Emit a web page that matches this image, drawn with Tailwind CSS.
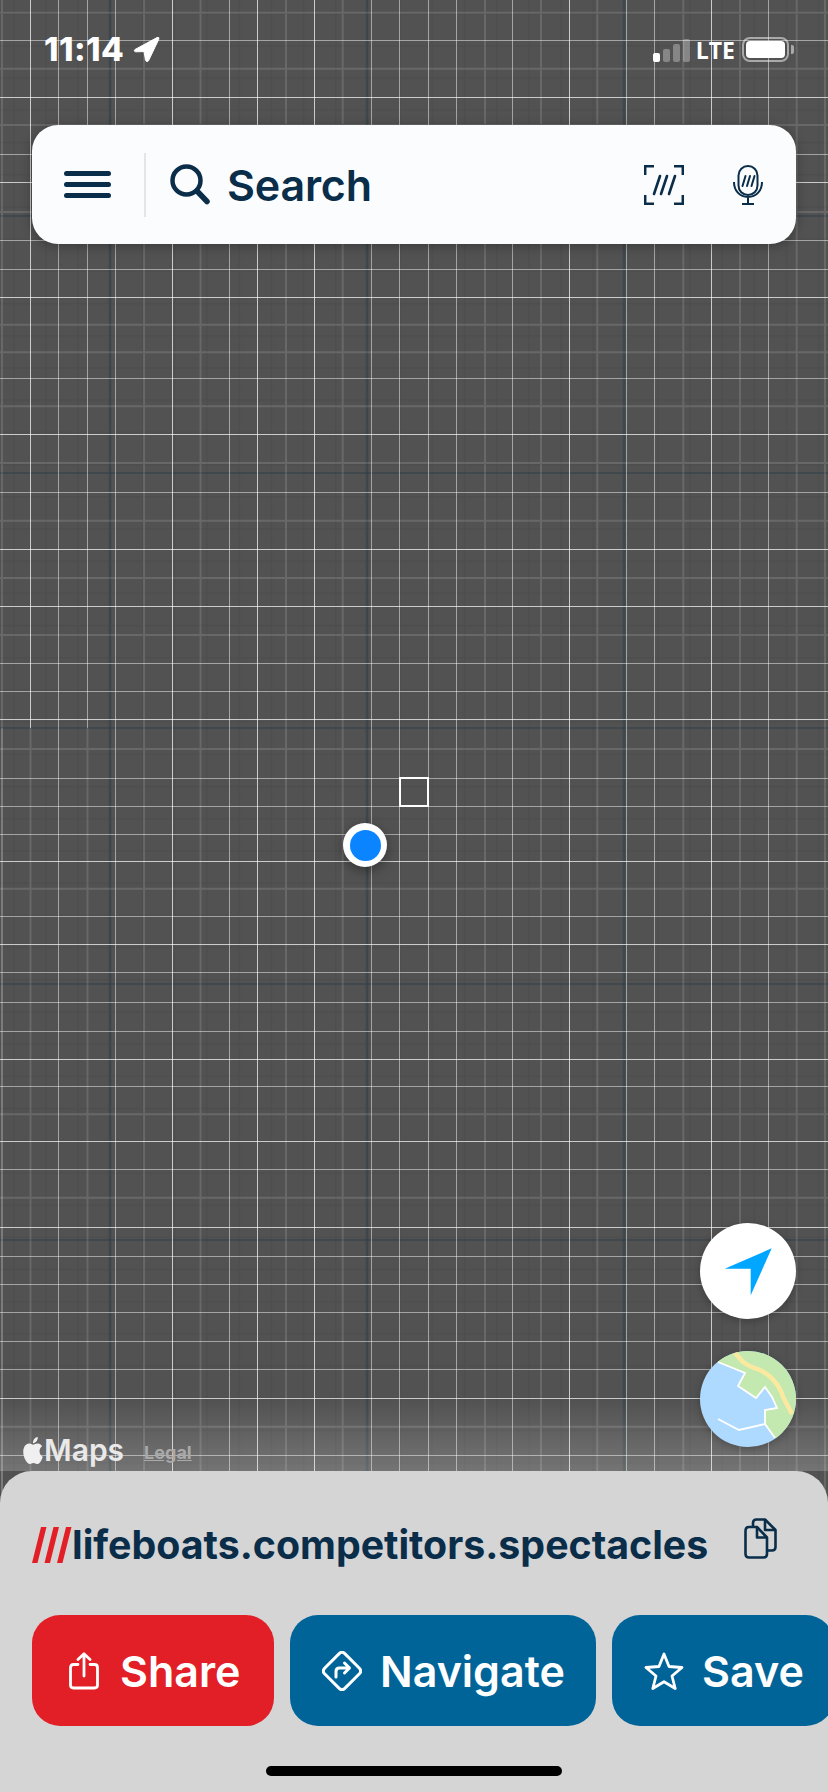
<!DOCTYPE html>
<html lang="en">
  <head>
    <meta charset="UTF-8" />
    <meta name="viewport" content="width=device-width, initial-scale=1" />
    <title>what3words map</title>
    <script src="https://cdn.jsdelivr.net/npm/@tailwindcss/browser@4"></script>
  </head>
  <body class="bg-[#525252] font-['Inter',sans-serif]">
    <div class="relative w-[828px] h-[1792px] overflow-hidden flex flex-col bg-[#525252]">
      <!-- Map grid -->
      <svg class="absolute inset-0" width="828" height="1792" fill="none">
        <defs>
          <pattern id="faint" x="13" y="13" width="32.2" height="32.2" patternUnits="userSpaceOnUse">
            <path d="M0 0V32.2M0 0H32.2" stroke="#000" stroke-opacity=".05" stroke-width="3" />
          </pattern>
        </defs>
        <rect width="828" height="1792" fill="url(#faint)" />
        <path stroke="#2f4048" stroke-opacity=".55" stroke-width="2.5" d="M110 0V1792M367 0V1792M624 0V1792" />
        <path stroke="#2f4048" stroke-opacity=".55" stroke-width="2" d="M0 216H828M0 473H828M0 728H828M0 984H828M0 1240H828" />
        <path stroke="#fff" stroke-opacity=".13" stroke-width="2" d="M2 0V728M30.5 728V1792M87.5 728V1792M144 0V1792M200.5 0V1792M286 0V1792M342.7 0V1792M485 0V1792M541 0V1792M597.3 0V1792M683.3 0V1792M740 0V1792M796.7 0V1792M825 0V1792M0 12.7H828M0 68.7H828M0 125H828M0 212H828M0 324.7H828M0 352.3H828M0 406.3H828M0 463H828M0 520.7H828M0 578H828M0 635H828M0 749H828M0 888.7H828M0 1114.3H828M0 1197.7H828M0 1426.7H828" />
        <path stroke="#fff" stroke-opacity=".48" d="M2 728V1792M58.5 0V1792M87.5 0V728M115.5 0V1792M229.5 0V1792M371.5 0V1792M399.5 0V1792M428.5 0V1792M456.5 0V1792M512.5 0V1792M626.5 0V1792M654.5 0V1792M768.5 0V1792M0 40.5H828M0 154.5H828M0 240.5H828M0 269.5H828M0 378.5H828M0 492.5H828M0 663.5H828M0 691.5H828M0 778.5H828M0 806.5H828M0 834.5H828M0 916.5H828M0 972.5H828M0 1002.5H828M0 1031.5H828M0 1086.5H828M0 1169.5H828M0 1256.5H828M0 1284.5H828M0 1312.5H828M0 1341.5H828M0 1369.5H828M0 1455.5H828" />
        <path stroke="#fff" stroke-opacity=".7" d="M30.5 0V728M172.5 0V1792M257.5 0V1792M314.5 0V1792M569.5 0V1792M711.5 0V1792M0 97.5H828M0 182.5H828M0 297.5H828M0 434.5H828M0 549.5H828M0 606.5H828M0 719.5H828M0 861.5H828M0 944.5H828M0 1059.5H828M0 1141.5H828M0 1227.5H828M0 1398.5H828" />
      </svg>
      <div class="absolute left-0 right-0 top-[1400px] h-[71px] bg-linear-to-b from-white/0 to-white/20"></div>

      <!-- Status bar -->
      <div class="relative h-[125px] flex justify-between pl-[44px] pr-[34px] pt-[29px] text-white">
        <div class="flex items-start gap-[9px]">
          <span class="text-[33px] leading-[40px] font-extrabold tracking-[0.4px]">11:14</span>
          <svg class="mt-[7px]" width="27" height="27" viewBox="0 0 27 27" fill="#fff" stroke="#fff" stroke-width="1" stroke-linejoin="round">
            <path d="M2 13.5 L24 1.6 Q26.6 .6 25.8 3.2 L15.6 24.6 Q14 27 12.6 24.4 L11 15.6 L2.6 15.8 Q0 15 2 13.5Z" />
          </svg>
        </div>
        <div class="flex items-start">
          <div class="flex items-end gap-[3px] h-[24px] mt-[9px]">
            <div class="w-[7px] h-[9px] rounded-[2px] bg-white"></div>
            <div class="w-[7px] h-[13px] rounded-[2px] bg-white/30"></div>
            <div class="w-[7px] h-[18px] rounded-[2px] bg-white/30"></div>
            <div class="w-[7px] h-[23px] rounded-[2px] bg-white/30"></div>
          </div>
          <span class="ml-[6px] mt-[5px] text-[23px] leading-[32px] font-bold font-['Open_Sans',sans-serif]">LTE</span>
          <div class="ml-[7px] mt-[8px] w-[47px] h-[25px] rounded-[8px] border-2 border-white/50 p-[2px]">
            <div class="w-full h-full rounded-[4px] bg-white"></div>
          </div>
          <div class="ml-[2px] mt-[16px] w-[3px] h-[9px] rounded-r-[2px] bg-white/50"></div>
        </div>
      </div>

      <!-- Search bar -->
      <div class="relative mx-[32px] h-[119px] rounded-[26px] bg-[#fbfcfe] shadow-[0_2px_12px_rgba(0,0,0,0.3)] flex items-center text-[#0a2d4a]">
        <svg class="ml-[32px]" width="47" height="28" viewBox="0 0 47 28" fill="#0a2d4a">
          <rect y="0" width="47" height="5" rx="2.5" />
          <rect y="11" width="47" height="5" rx="2.5" />
          <rect y="22" width="47" height="5" rx="2.5" />
        </svg>
        <div class="ml-[33px] w-[2px] h-[64px] bg-[#e4e5e8]"></div>
        <svg class="ml-[24px]" width="40" height="41" viewBox="0 0 40 41" fill="none" stroke="#0a2d4a" stroke-width="4.5" stroke-linecap="round">
          <circle cx="16.5" cy="16.5" r="14" />
          <path d="M27 27L37 37.5" stroke-width="5.5" />
        </svg>
        <span class="ml-[17px] text-[43px] leading-[50px] font-semibold tracking-[-0.2px]">Search</span>
        <svg class="ml-auto" width="40" height="40" viewBox="0 0 40 40" fill="none" stroke="#0a2d4a" stroke-width="2.5">
          <path d="M1.2 10V1.2H10M30 1.2H38.8V10M38.8 30V38.8H30M10 38.8H1.2V30" />
          <path stroke-linecap="round" stroke-width="2.6" d="M16 11L10 29M23 11L17 29M31 11L25 29" />
        </svg>
        <svg class="ml-[49px] mr-[33px]" width="30" height="40" viewBox="0 0 30 40" fill="none" stroke="#0a2d4a" stroke-width="2">
          <rect x="5.5" y="1" width="19" height="29" rx="9.5" />
          <path d="M1 17C1 25.5 6.5 32 15 32S29 25.5 29 17M15 32V39M9 39H21" />
          <path stroke-linecap="round" d="M12.5 11L9.5 21M17 11L14 21M21.5 11L18.5 21" />
        </svg>
      </div>

      <!-- Map overlays -->
      <div class="relative flex-1 flex justify-between items-end pl-[21px] pr-[32px] pb-[24px]">
        <svg class="absolute left-[399px] top-[533px]" width="30" height="30" fill="none" stroke="#fff" stroke-width="2">
          <rect x="1" y="1" width="28" height="28" />
        </svg>
        <div class="absolute left-[343px] top-[579px] w-[44px] h-[44px] rounded-full bg-white shadow-[0_4px_12px_rgba(0,0,0,0.35)] flex items-center justify-center">
          <div class="w-[31px] h-[31px] rounded-full bg-[#0a84ff]"></div>
        </div>

        <div class="flex items-center gap-[20px] -mb-[24px] pb-[3px]">
          <div class="flex items-center text-[#e9e9e9]">
            <svg width="24" height="27" viewBox="0 0 24 24" fill="#f0f0f0" preserveAspectRatio="none">
              <path d="M12.152 6.896c-.948 0-2.415-1.078-3.96-1.04-2.04.027-3.91 1.183-4.961 3.014-2.117 3.675-.546 9.103 1.519 12.09 1.013 1.454 2.208 3.09 3.792 3.039 1.52-.065 2.09-.987 3.935-.987 1.831 0 2.35.987 3.96.948 1.637-.026 2.676-1.48 3.676-2.948 1.156-1.688 1.636-3.325 1.662-3.415-.039-.013-3.182-1.221-3.22-4.857-.026-3.04 2.48-4.494 2.597-4.559-1.429-2.09-3.623-2.324-4.39-2.376-2-.156-3.675 1.09-4.61 1.09zM15.53 3.83c.843-1.012 1.4-2.427 1.245-3.83-1.207.052-2.662.805-3.532 1.818-.78.896-1.454 2.338-1.273 3.714 1.338.104 2.715-.688 3.559-1.701" />
            </svg>
            <span class="-ml-[1px] text-[30px] leading-[36px] font-semibold">Maps</span>
          </div>
          <a class="text-[18px] leading-[24px] font-bold underline text-[#a9a9a9] mt-[6px]">Legal</a>
        </div>

        <div class="flex flex-col gap-[32px]">
          <div class="w-[96px] h-[96px] rounded-full bg-white shadow-[0_2px_8px_rgba(0,0,0,0.25)] flex items-center justify-center">
            <svg width="48" height="48" viewBox="0 0 48 48" fill="#00a6ff">
              <path d="M.7 21.7L47.7 1.3 26.7 48.3V21.7Z" />
            </svg>
          </div>
          <div class="w-[96px] h-[96px] rounded-full overflow-hidden shadow-[0_2px_8px_rgba(0,0,0,0.25)]">
            <svg width="96" height="96" viewBox="0 0 96 96" fill="none">
              <rect width="96" height="96" fill="#aedaff" />
              <path fill="#c3e9b0" d="M18 11L45 22 38 35 56 47 65 36 72 46 77 57 65 59 65 73 75 87 96 96V0H18Z" />
              <path stroke="#fbe9a0" stroke-width="4.5" d="M35 2L43 11Q50 16 60 19 70 24 75 31 81 38 83 46L92 63" />
              <path stroke="#fff" stroke-width="1.8" d="M18 11L45 22 38 35 56 47 65 36 72 46 77 57 65 59 65 73 75 87M18 68L39 79 65 73" />
            </svg>
          </div>
        </div>
      </div>

      <!-- Bottom sheet -->
      <div class="relative h-[321px] rounded-t-[32px] bg-[#d5d5d5] flex flex-col">
        <div class="flex items-center h-[144px] pl-[32px] pt-[4px]">
          <svg class="shrink-0" width="40" height="36" viewBox="0 0 40 36" fill="#e21f26">
            <path d="M0 36L9 0H14.5L5.5 36ZM12.5 36L21.5 0H27L18 36ZM25 36L34 0H39.5L30.5 36Z" />
          </svg>
          <span class="text-[#0a2d4a] text-[39.3px] leading-[44px] font-bold">lifeboats.competitors.spectacles</span>
          <svg class="ml-auto mr-[51px] -mt-[14px]" width="33" height="41" viewBox="0 0 33 41" fill="none" stroke="#0a2d4a" stroke-width="2.6" stroke-linejoin="round">
            <path d="M9 9V5Q9 1.5 12.5 1.5H21L31.5 12V29Q31.5 32.5 28 32.5H23" />
            <path d="M21 1.5V12H31.5" />
            <path d="M1.5 13Q1.5 9 5 9H13L23 19.5V36Q23 39.5 19.5 39.5H5Q1.5 39.5 1.5 36Z" />
            <path d="M13 9V19.5H23" />
          </svg>
        </div>
        <div class="flex gap-[16px] pl-[32px] text-white text-[43px] leading-[50px] font-semibold">
          <div class="shrink-0 w-[242px] h-[111px] rounded-[28px] bg-[#e21f26] flex items-center pl-[37px]">
            <svg width="30" height="38" viewBox="0 0 30 38" fill="none" stroke="#fff" stroke-width="2.8" stroke-linecap="round" stroke-linejoin="round">
              <path d="M9 12.5H4.5Q1.5 12.5 1.5 15.5V33Q1.5 36 4.5 36H25.5Q28.5 36 28.5 33V15.5Q28.5 12.5 25.5 12.5H21" />
              <path d="M15 24V2M9 7.5L15 1.8 21 7.5" />
            </svg>
            <span class="ml-[21px]">Share</span>
          </div>
          <div class="shrink-0 w-[306px] h-[111px] rounded-[28px] bg-[#016499] flex items-center pl-[32px]">
            <svg width="40" height="40" viewBox="0 0 40 40" fill="none" stroke="#fff" stroke-width="3" stroke-linecap="round" stroke-linejoin="round">
              <path d="M17.2 2.6Q20 0 22.8 2.6L37.4 17.2Q40 20 37.4 22.8L22.8 37.4Q20 40 17.2 37.4L2.6 22.8Q0 20 2.6 17.2Z" />
              <path d="M14 26V20.5Q14 17 17.5 17H27M22.5 12L27.5 17 22.5 22" />
            </svg>
            <span class="ml-[18px]">Navigate</span>
          </div>
          <div class="shrink-0 w-[222px] h-[111px] rounded-[28px] bg-[#016499] flex items-center pl-[32px]">
            <svg width="40" height="38" viewBox="0 0 40 38" fill="none" stroke="#fff" stroke-width="2.8" stroke-linejoin="round">
              <path d="M20 2L25 14.5 38 15.5 28 24 31.2 36.5 20 29.7 8.8 36.5 12 24 2 15.5 15 14.5Z" />
            </svg>
            <span class="ml-[18px]">Save</span>
          </div>
        </div>
        <div class="mt-auto mb-[16px] mx-auto w-[296px] h-[10px] rounded-full bg-black"></div>
      </div>
    </div>
  </body>
</html>
